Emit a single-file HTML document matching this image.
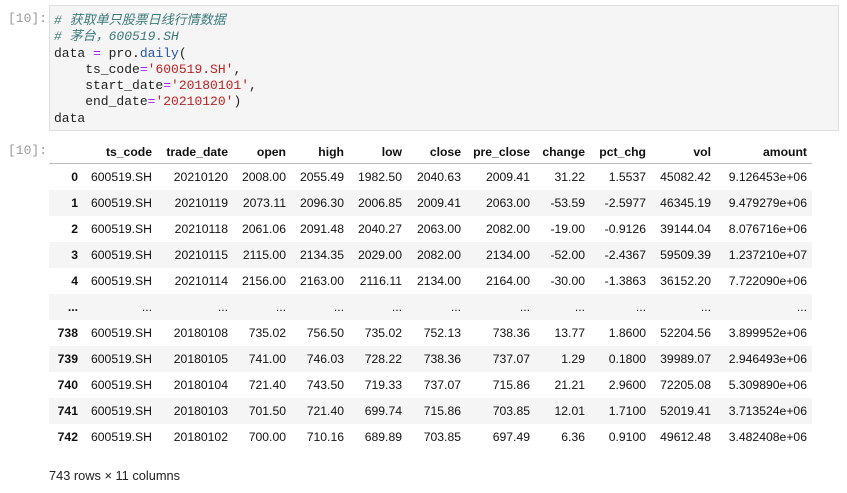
<!DOCTYPE html>
<html><head><meta charset="utf-8"><style>
body{margin:0;width:847px;height:493px;background:#fff;position:relative;overflow:hidden;font-family:"Liberation Sans","Noto Sans CJK SC",sans-serif;}
.prompt{position:absolute;left:8px;font-family:"Liberation Mono",monospace;font-size:13px;color:#999;}
.code{position:absolute;left:49px;top:5px;width:790px;height:126px;background:#f5f5f5;border:1px solid #e0e0e0;box-sizing:border-box;}
pre{margin:0;position:absolute;left:4px;top:7px;font-family:"Liberation Mono","Noto Sans CJK SC",monospace;font-size:13px;line-height:16.3px;color:#222;}
.c{color:#3d7a7a;font-style:italic}.s{color:#b22;}.o{color:#a2f;}.f{color:#2255aa;}
table{position:absolute;left:49px;top:140px;border-collapse:collapse;table-layout:fixed;width:763px;font-size:12.2px;color:#111;}
td,th{text-align:right;padding:0 5px 0 0;white-space:nowrap;height:26px;}
th{font-weight:bold;height:23px;border-bottom:1px solid #bbb;}
tbody tr:nth-child(even){background:#f5f5f5;}
tbody th{border:none;height:26px;}
.foot{position:absolute;left:49px;top:468px;font-size:12.8px;color:#222;}
</style></head><body>
<div class="prompt" style="top:11px">[10]:</div>
<div class="code"><pre><span class="c"># 获取单只股票日线行情数据
# 茅台，600519.SH</span>
data <span class="o">=</span> pro.<span class="f">daily</span>(
    ts_code<span class="o">=</span><span class="s">'600519.SH'</span>,
    start_date<span class="o">=</span><span class="s">'20180101'</span>,
    end_date<span class="o">=</span><span class="s">'20210120'</span>)
data</pre></div>
<div class="prompt" style="top:143px">[10]:</div>
<table>
<colgroup><col style="width:34px"><col style="width:74px"><col style="width:76px"><col style="width:58px"><col style="width:58px"><col style="width:58px"><col style="width:59px"><col style="width:69px"><col style="width:55px"><col style="width:61px"><col style="width:65px"><col style="width:96px"></colgroup>
<thead><tr><th></th><th>ts_code</th><th>trade_date</th><th>open</th><th>high</th><th>low</th><th>close</th><th>pre_close</th><th>change</th><th>pct_chg</th><th>vol</th><th>amount</th></tr></thead>
<tbody>
<tr><th>0</th><td>600519.SH</td><td>20210120</td><td>2008.00</td><td>2055.49</td><td>1982.50</td><td>2040.63</td><td>2009.41</td><td>31.22</td><td>1.5537</td><td>45082.42</td><td>9.126453e+06</td></tr>
<tr><th>1</th><td>600519.SH</td><td>20210119</td><td>2073.11</td><td>2096.30</td><td>2006.85</td><td>2009.41</td><td>2063.00</td><td>-53.59</td><td>-2.5977</td><td>46345.19</td><td>9.479279e+06</td></tr>
<tr><th>2</th><td>600519.SH</td><td>20210118</td><td>2061.06</td><td>2091.48</td><td>2040.27</td><td>2063.00</td><td>2082.00</td><td>-19.00</td><td>-0.9126</td><td>39144.04</td><td>8.076716e+06</td></tr>
<tr><th>3</th><td>600519.SH</td><td>20210115</td><td>2115.00</td><td>2134.35</td><td>2029.00</td><td>2082.00</td><td>2134.00</td><td>-52.00</td><td>-2.4367</td><td>59509.39</td><td>1.237210e+07</td></tr>
<tr><th>4</th><td>600519.SH</td><td>20210114</td><td>2156.00</td><td>2163.00</td><td>2116.11</td><td>2134.00</td><td>2164.00</td><td>-30.00</td><td>-1.3863</td><td>36152.20</td><td>7.722090e+06</td></tr>
<tr><th>...</th><td>...</td><td>...</td><td>...</td><td>...</td><td>...</td><td>...</td><td>...</td><td>...</td><td>...</td><td>...</td><td>...</td></tr>
<tr><th>738</th><td>600519.SH</td><td>20180108</td><td>735.02</td><td>756.50</td><td>735.02</td><td>752.13</td><td>738.36</td><td>13.77</td><td>1.8600</td><td>52204.56</td><td>3.899952e+06</td></tr>
<tr><th>739</th><td>600519.SH</td><td>20180105</td><td>741.00</td><td>746.03</td><td>728.22</td><td>738.36</td><td>737.07</td><td>1.29</td><td>0.1800</td><td>39989.07</td><td>2.946493e+06</td></tr>
<tr><th>740</th><td>600519.SH</td><td>20180104</td><td>721.40</td><td>743.50</td><td>719.33</td><td>737.07</td><td>715.86</td><td>21.21</td><td>2.9600</td><td>72205.08</td><td>5.309890e+06</td></tr>
<tr><th>741</th><td>600519.SH</td><td>20180103</td><td>701.50</td><td>721.40</td><td>699.74</td><td>715.86</td><td>703.85</td><td>12.01</td><td>1.7100</td><td>52019.41</td><td>3.713524e+06</td></tr>
<tr><th>742</th><td>600519.SH</td><td>20180102</td><td>700.00</td><td>710.16</td><td>689.89</td><td>703.85</td><td>697.49</td><td>6.36</td><td>0.9100</td><td>49612.48</td><td>3.482408e+06</td></tr>
</tbody></table>
<div class="foot">743 rows × 11 columns</div>
</body></html>
